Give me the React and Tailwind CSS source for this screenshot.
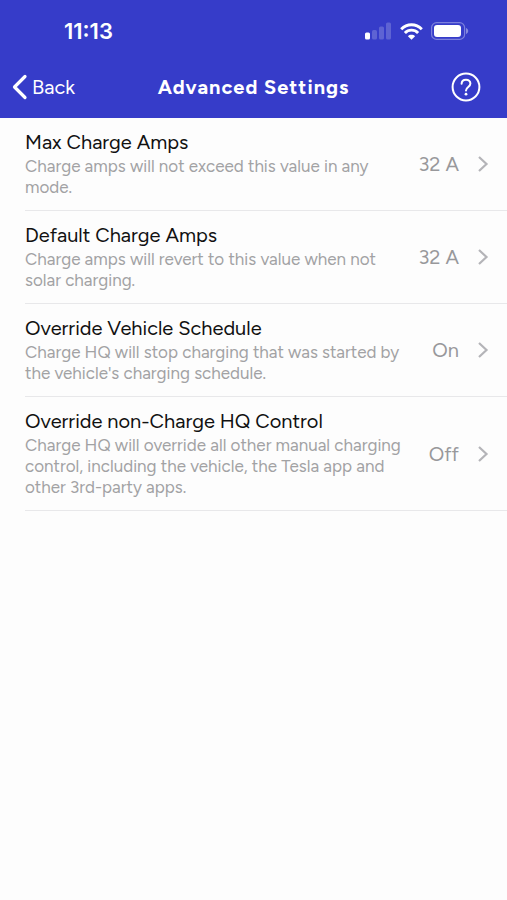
import React from 'react';

const settings = [
  {
    id: 'max-amps',
    title: 'Max Charge Amps',
    description: 'Charge amps will not exceed this value in any mode.',
    value: '32 A',
  },
  {
    id: 'default-amps',
    title: 'Default Charge Amps',
    description: 'Charge amps will revert to this value when not solar charging.',
    value: '32 A',
  },
  {
    id: 'override-schedule',
    title: 'Override Vehicle Schedule',
    description: "Charge HQ will stop charging that was started by the vehicle's charging schedule.",
    value: 'On',
  },
  {
    id: 'override-control',
    title: 'Override non-Charge HQ Control',
    description:
      'Charge HQ will override all other manual charging control, including the vehicle, the Tesla app and other 3rd-party apps.',
    value: 'Off',
  },
];

function SignalIcon() {
  return (
    <svg width="27" height="18" viewBox="0 0 27 18" fill="white" aria-hidden="true">
      <rect x="0" y="10.500" width="5" height="7" rx="1.500" />
      <rect x="7" y="8" width="5" height="9.500" rx="1.500" opacity="0.2" />
      <rect x="14" y="4.500" width="5" height="13" rx="1.500" opacity="0.2" />
      <rect x="21" y="0.5" width="5" height="17" rx="1.500" opacity="0.2" />
    </svg>
  );
}

function WifiIcon() {
  return (
    <svg width="23" height="17" viewBox="0 0 23 17" fill="none" stroke="white" strokeWidth="2.900" aria-hidden="true">
      <path d="M1.200 6.200C7 .2 16 .2 21.800 6.200" />
      <path d="M4.900 10C8.600 6.200 14.400 6.200 18.100 10" />
      <path d="M11.500 16.800 7.900 13.200C9.900 11.300 13.100 11.300 15.100 13.200Z" fill="white" stroke="none" />
    </svg>
  );
}

function BatteryIcon() {
  return (
    <svg width="38" height="18" viewBox="0 0 38 18" aria-hidden="true">
      <rect x="0.6" y="0.6" width="33" height="16.800" rx="5" fill="none" stroke="white" strokeWidth="1.200" opacity="0.35" />
      <rect x="3" y="3" width="27" height="12" rx="3" fill="white" />
      <path d="M35 6v6c1.400-.5 2.200-1.600 2.200-3S36.400 6.500 35 6Z" fill="white" opacity="0.4" />
    </svg>
  );
}

function StatusBar() {
  return (
    <div className="flex h-[62px] items-center justify-between pr-[38px] pl-16">
      <span className="font-[Inter,sans-serif] text-[22px] font-semibold">11:13</span>
      <div className="flex items-center gap-2">
        <SignalIcon />
        <WifiIcon />
        <BatteryIcon />
      </div>
    </div>
  );
}

function NavBar() {
  return (
    <div className="grid h-14 grid-cols-[1fr_auto_1fr] items-center px-3 pb-1.5">
      <button type="button" className="flex items-center gap-1 justify-self-start text-xl">
        <svg width="16" height="26" viewBox="0 0 16 26" fill="none" stroke="white" strokeWidth="3.200" strokeLinecap="round" strokeLinejoin="round" aria-hidden="true">
          <path d="M13 2.500 2.500 13 13 23.500" />
        </svg>
        Back
      </button>
      <h1 className="text-xl font-bold tracking-wider">Advanced Settings</h1>
      <button type="button" aria-label="Help" className="mr-[14px] justify-self-end">
        <svg width="30" height="30" viewBox="0 0 30 30" fill="none" stroke="white" strokeWidth="2" strokeLinecap="round" strokeLinejoin="round" aria-hidden="true">
          <circle cx="15" cy="15" r="13.400" />
          <path d="M10.600 11.800c.1-2.500 1.900-4.100 4.400-4.100s4.400 1.600 4.400 3.900c0 3.500-4.400 3.200-4.400 6.900" />
          <circle cx="15" cy="22.200" r="1.400" fill="white" stroke="none" />
        </svg>
      </button>
    </div>
  );
}

function SettingRow({ setting }) {
  return (
    <li className="ml-[25px] border-b border-[#e8e8ea]">
      <button type="button" className="flex w-full items-center justify-between py-3 pr-[18px] text-left">
        <span className="block w-[380px]">
          <span className="block text-xl leading-6 text-[#111111]">{setting.title}</span>
          <span className="mt-0.5 block text-[17px] leading-[21px] text-[#a2a2a4]">{setting.description}</span>
        </span>
        <span className="flex shrink-0 items-center gap-[18px] text-xl text-[#98989b]">
          {setting.value}
          <svg width="12" height="18" viewBox="0 0 12 18" fill="none" stroke="#b4b4b8" strokeWidth="2.200" aria-hidden="true">
            <path d="M2 2 9.500 9 2 16" />
          </svg>
        </span>
      </button>
    </li>
  );
}

export default function App() {
  return (
    <div className="min-h-screen bg-[#fdfdfd] font-[Figtree,Inter,sans-serif]">
      <header className="bg-[#363cc9] text-white">
        <StatusBar />
        <NavBar />
      </header>
      <main>
        <ul>
          {settings.map((setting) => (
            <SettingRow key={setting.id} setting={setting} />
          ))}
        </ul>
      </main>
    </div>
  );
}
